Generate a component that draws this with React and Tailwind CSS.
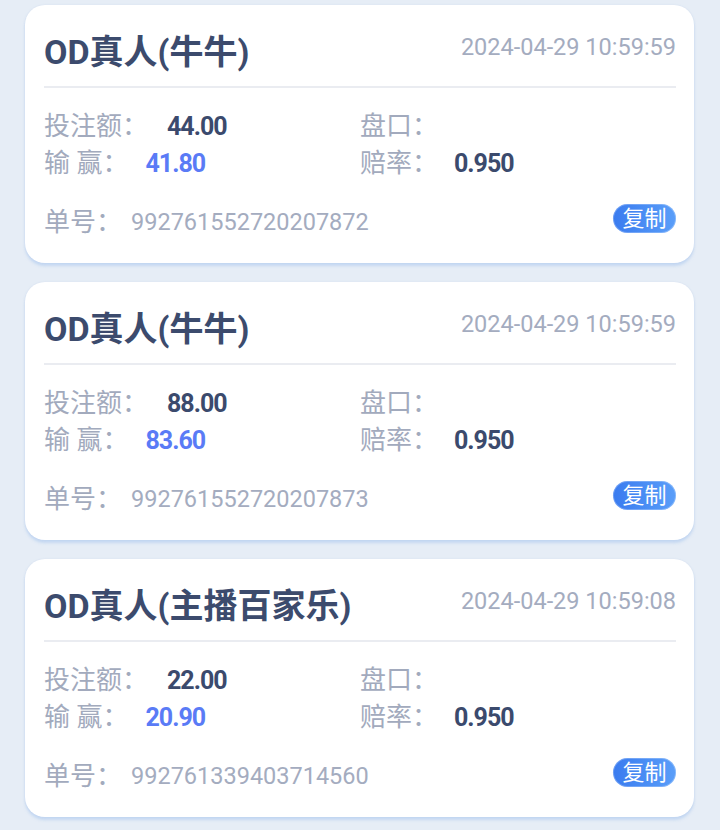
const orders = [
  { title: "OD真人(牛牛)", time: "2024-04-29 10:59:59", bet: "44.00", win: "41.80", odds: "0.950", no: "992761552720207872" },
  { title: "OD真人(牛牛)", time: "2024-04-29 10:59:59", bet: "88.00", win: "83.60", odds: "0.950", no: "992761552720207873" },
  { title: "OD真人(主播百家乐)", time: "2024-04-29 10:59:08", bet: "22.00", win: "20.90", odds: "0.950", no: "992761339403714560" },
];

const cjk = { fontFamily: "Roboto, 'Noto Sans CJK SC', sans-serif" };

function OrderCard({ o }) {
  return (
    <div className="bg-white rounded-[20px] px-[19px] pr-[18px] shadow-[0_3px_3px_rgba(170,198,238,0.55),0_0_2px_rgba(200,215,235,0.6)]">
      {/* header */}
      <div className="flex items-start justify-between pt-[28px] pb-[15px] border-b-2 border-[#eaecf1]">
        <div className="text-[34px] leading-[38px] font-bold text-[#3c4b6d]">{o.title}</div>
        <div className="text-[23.5px] leading-[28px] text-[#a4acbf]">{o.time}</div>
      </div>

      {/* body */}
      <div className="grid grid-cols-2 pt-[20px] text-[26px] leading-[37px] text-[#a2aabd]">
        <div className="flex items-center">
          <span>投注额：</span>
          <span className="ml-[19px] text-[25px] font-bold tracking-[-1px] text-[#3b4a6d]">{o.bet}</span>
        </div>
        <div className="flex items-center">
          <span>盘口：</span>
        </div>
        <div className="flex items-center">
          <span>输 赢：</span>
          <span className="ml-[17px] text-[25px] font-bold tracking-[-1px] text-[#5a7bf6]">{o.win}</span>
        </div>
        <div className="flex items-center">
          <span>赔率：</span>
          <span className="ml-[16px] text-[25px] font-bold tracking-[-1px] text-[#3b4a6d]">{o.odds}</span>
        </div>
      </div>

      {/* footer */}
      <div className="flex items-center justify-between mt-[20px] pb-[21px]">
        <div className="flex items-center text-[#a2aabd]">
          <span className="text-[26px] leading-[40px]">单号：</span>
          <span className="ml-[9px] text-[23.5px] leading-[40px] text-[#a4acbf]">{o.no}</span>
        </div>
        <button className="-mt-[7px] h-[29px] w-[63px] rounded-full bg-gradient-to-r from-[#3a7bef] to-[#5a9ef9] text-white text-[22px] leading-[29px] shadow-[inset_0_0_0_1px_rgba(255,255,255,0.25)]">
          复制
        </button>
      </div>
    </div>
  );
}

export default function App() {
  return (
    <div className="min-h-screen bg-[#e6edf6] px-[25px] pr-[26px] pt-[5px] pb-[12px] flex flex-col gap-[19px]" style={cjk}>
      {orders.map((o, i) => (
        <OrderCard key={i} o={o} />
      ))}
    </div>
  );
}
